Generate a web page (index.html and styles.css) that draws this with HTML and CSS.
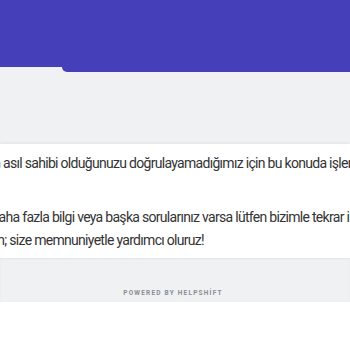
FILE: index.html
```html
<!DOCTYPE html>
<html lang="tr">
<head>
    <meta charset="UTF-8">
    <meta name="viewport" content="width=device-width, initial-scale=1.0">
    <title>Yardım</title>
    <link rel="stylesheet" href="styles.css">
</head>
<body>
    <!-- Header band -->
    <div class="masthead">
        <header class="top-bar"></header>
        <div class="top-tab"></div>
    </div>

    <main class="page">
        <section class="answer-card">
            <div class="answer-body">
                <p class="line">Sizin asıl sahibi olduğunuzu doğrulayamadığımız için bu konuda işlem yapamıyoruz.</p>
                <p class="para">
                    <span class="line">Ve daha fazla bilgi veya başka sorularınız varsa lütfen bizimle tekrar iletişime</span>
                    <span class="line">geçin; size memnuniyetle yardımcı oluruz!</span>
                </p>
            </div>
        </section>
    </main>

    <footer class="powered">
        <p>Powered by Helpshift</p>
    </footer>
</body>
</html>
```

FILE: styles.css
```css
/* Base */
body {
    margin: 0;
    padding: 0;
    background-color: #ffffff;
    font-family: Roboto, "Liberation Sans", sans-serif;
    color: #333333;
    overflow: hidden;
}

/* Header */
.masthead {
    background-color: #f0f1f3;
}

.top-bar {
    height: 67px;
    background-color: #4540b9;
}

.top-tab {
    height: 5px;
    margin-left: 62px;
    background-color: #4540b9;
    border-bottom-left-radius: 6px;
}

.page {
    background-color: #f0f1f3;
    padding-top: 72px;
}

/* Card */
.answer-card {
    background: white;
    box-shadow: 0 -1px 3px rgba(0, 0, 0, 0.06);
    padding: 8px 0 6px;
}

.answer-body {
    margin-left: -26px;
    font-size: 14px;
    letter-spacing: -0.7px;
    line-height: 23px;
}

.answer-body .line {
    display: block;
    white-space: nowrap;
    margin: 0;
}

.answer-body .para {
    margin: 31px 0 0;
}

/* Footer */
.powered {
    background-color: #f0f1f3;
    height: 44px;
    box-shadow: inset 0 1px 2px rgba(0, 0, 0, 0.05);
    display: flex;
    align-items: flex-end;
    justify-content: center;
}

.powered p {
    margin: 0 0 5px -4px;
    font-size: 6.5px;
    font-weight: bold;
    letter-spacing: 1.2px;
    text-transform: uppercase;
    color: #8a8c92;
}
```
